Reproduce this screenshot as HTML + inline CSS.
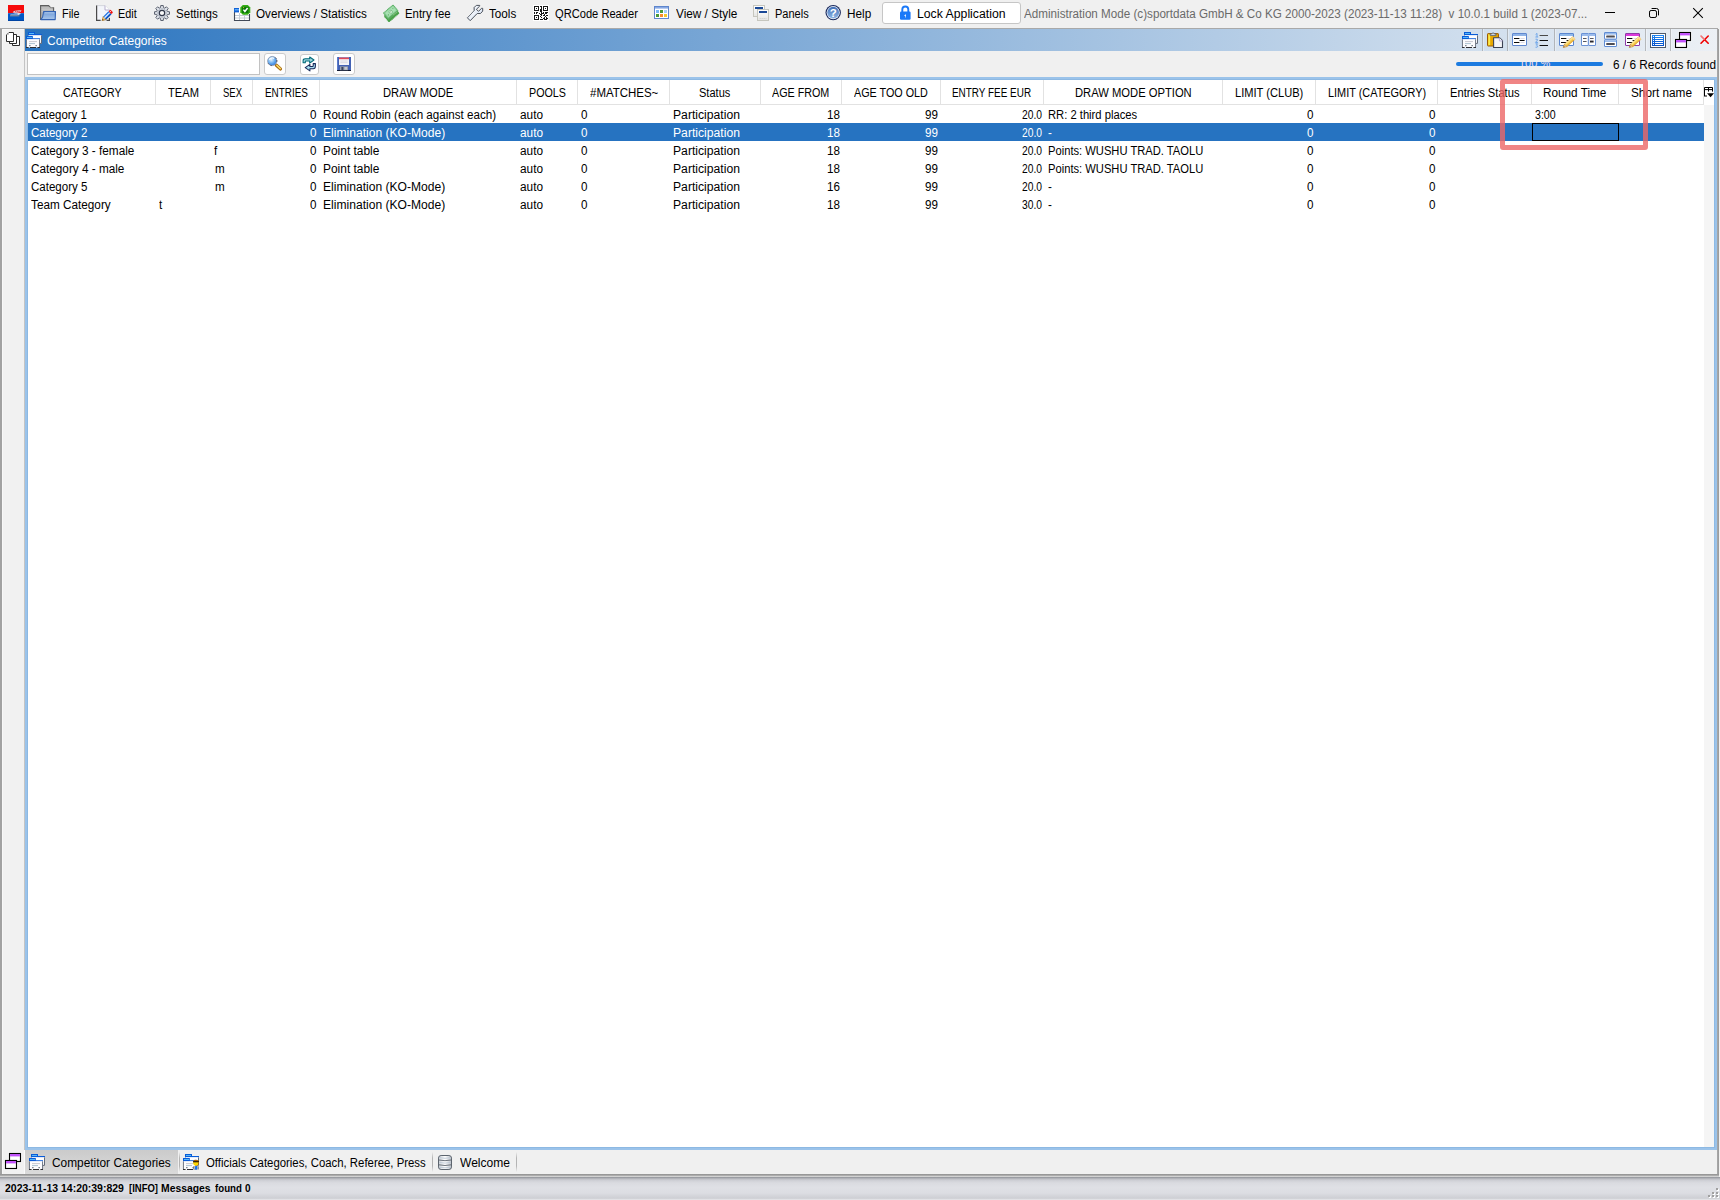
<!DOCTYPE html>
<html lang="en">
<head>
<meta charset="utf-8">
<title>Competitor Categories</title>
<style>
html,body{margin:0;padding:0;}
body{width:1720px;height:1200px;position:relative;overflow:hidden;background:#f0f0f0;font-family:"Liberation Sans",sans-serif;font-size:12px;color:#000;}
.a{position:absolute;}
.t{position:absolute;white-space:pre;transform-origin:0 0;font-family:"Liberation Sans",sans-serif;display:block;}
svg{position:absolute;overflow:visible;}
#menuline{left:0;top:28px;width:1718px;height:1px;background:#a9a9a9;}
#lborder{left:0;top:29px;width:2px;height:1146px;background:#a2a2a2;}
#rborder{left:1717px;top:29px;width:2px;height:1146px;background:linear-gradient(90deg,#a9a9a9,#9a9a9a);}
#bborder{left:0;top:1174px;width:1719px;height:3px;background:linear-gradient(180deg,#969696 0,#9a9a9a 45%,#cfcfcf 60%,#d4d4d4 100%);}
#title{left:25px;top:29px;width:1692px;height:22px;background:linear-gradient(90deg,#2873bf 0%,#ecf0f5 100%);}
#tools{display:none;}
.vsep{position:absolute;top:29px;width:1px;height:22px;background:rgba(150,150,150,0.6);box-shadow:1px 0 0 rgba(255,255,255,0.35);}
#search{left:27px;top:53px;width:231px;height:20px;background:#fff;border:1px solid #c2c2c2;}
.btn{position:absolute;background:#fff;border:1px solid #cbcbcb;border-radius:3px;box-sizing:border-box;}
#lockbtn{left:882px;top:2px;width:139px;height:22px;background:#fff;border:1px solid #c6c6c6;border-radius:3px;box-sizing:border-box;}
#table{left:25px;top:77px;width:1686px;height:1067px;border:3px solid #9bc3ea;background:#fff;}
#tblin{left:27px;top:79px;width:1688px;height:1069px;border:1px solid #8db9e3;box-sizing:border-box;}
#hline{left:28px;top:104px;width:1676px;height:1px;background:#e2e2e2;}
.hs{position:absolute;top:80px;width:1px;height:24px;background:#e2e2e2;}
#sbar{left:1704px;top:105px;width:10px;height:1042px;background:#f5f5f5;}
#sel{left:28px;top:123px;width:1676px;height:18px;background:#2673c1;}
#focus{left:1532px;top:123px;width:87px;height:18px;border:1px solid #000;box-sizing:border-box;}
#redbox{left:1500px;top:79px;width:148px;height:71px;border:5px solid rgba(236,102,102,0.8);border-radius:3px;box-sizing:border-box;}
#prog{left:1456px;top:62px;width:147px;height:4px;border-radius:2px;background:#1c7be0;overflow:hidden;}
#prog span{position:absolute;left:63px;top:-6px;font-size:11px;line-height:14px;color:#f2dfe6;letter-spacing:0;}
#tabact{left:25px;top:1150px;width:153px;height:24px;background:linear-gradient(180deg,#cbcbcb,#dadada);}
.tsep{position:absolute;top:1152px;width:1px;height:20px;background:linear-gradient(180deg,rgba(170,170,170,0),#b4b4b4 30%,#b4b4b4 70%,rgba(170,170,170,0));}
#lpane{left:2px;top:29px;width:22px;height:1145px;background:#f1f1f1;box-shadow:inset 1px 1px 0 #f8f8f8;}
#lpline{left:24px;top:29px;width:1px;height:1121px;background:#c4c4c4;}
#lpsep{left:24px;top:1150px;width:1px;height:24px;background:#fafafa;}
#status{left:0;top:1177px;width:1720px;height:23px;background:linear-gradient(180deg,#8f9197 0,#a4a6ac 4%,#bfc0c6 9%,#d0d1d7 16%,#dadbe0 26%,#dfe0e5 45%,#dcdde2 70%,#cfd0d5 90%,#d3d4d8 95%,#ececef 100%);}
.grip{position:absolute;width:2px;height:2px;background:#a0a0a0;box-shadow:1px 1px 0 #fff;}
</style>
</head>
<body>
<div class="a" id="menuline"></div>
<div class="a" id="lborder"></div>
<div class="a" id="rborder"></div>
<div class="a" id="lpane"></div>
<div class="a" id="lpline"></div>
<div class="a" id="title"></div>
<div class="a" id="tools"></div>
<div class="vsep" style="left:1482px"></div>
<div class="vsep" style="left:1507px"></div>
<div class="vsep" style="left:1554px"></div>
<div class="vsep" style="left:1645px"></div>
<div class="vsep" style="left:1670px"></div>
<div class="a" id="lockbtn"></div>
<div class="a" id="search"></div>
<div class="btn" style="left:264px;top:53px;width:22px;height:22px"></div>
<div class="btn" style="left:300px;top:54px;width:19px;height:21px"></div>
<div class="btn" style="left:333px;top:53px;width:22px;height:22px"></div>
<div class="a" id="prog"><span>100 %</span></div>
<div class="a" id="table"></div>
<div class="a" id="tblin"></div>
<div class="a" id="sbar"></div>
<div class="a" id="hline"></div>
<div class="hs" style="left:155px"></div>
<div class="hs" style="left:210px"></div>
<div class="hs" style="left:252px"></div>
<div class="hs" style="left:319px"></div>
<div class="hs" style="left:516px"></div>
<div class="hs" style="left:577px"></div>
<div class="hs" style="left:669px"></div>
<div class="hs" style="left:760px"></div>
<div class="hs" style="left:841px"></div>
<div class="hs" style="left:940px"></div>
<div class="hs" style="left:1043px"></div>
<div class="hs" style="left:1222px"></div>
<div class="hs" style="left:1315px"></div>
<div class="hs" style="left:1437px"></div>
<div class="hs" style="left:1531px"></div>
<div class="hs" style="left:1618px"></div>
<div class="hs" style="left:1703px"></div>
<div class="a" id="sel"></div>
<div class="a" id="focus"></div>
<div class="a" id="tabact"></div>
<div class="a" id="lpsep"></div>
<div class="tsep" style="left:179px"></div>
<div class="tsep" style="left:432px"></div>
<div class="tsep" style="left:516px"></div>
<div class="a" id="bborder"></div>
<div class="a" id="status"></div>
<div class="grip" style="left:1716px;top:1188px"></div>
<div class="grip" style="left:1712px;top:1191.5px"></div>
<div class="grip" style="left:1716px;top:1191.5px"></div>
<div class="grip" style="left:1708px;top:1195px"></div>
<div class="grip" style="left:1712px;top:1195px"></div>
<div class="grip" style="left:1716px;top:1195px"></div>
<svg width="0" height="0" style="left:0;top:0"><defs>
<linearGradient id="gBlueF" x1="0" y1="0" x2="0" y2="1"><stop offset="0" stop-color="#6f9bd8"/><stop offset="1" stop-color="#a9c6ea"/></linearGradient>
<linearGradient id="gHelp" x1="0" y1="0" x2="0" y2="1"><stop offset="0" stop-color="#3f6fb8"/><stop offset="1" stop-color="#8fb6e4"/></linearGradient>
<radialGradient id="gLens" cx="0.4" cy="0.35" r="0.7"><stop offset="0" stop-color="#e6f3fc"/><stop offset="0.55" stop-color="#6aaef0"/><stop offset="1" stop-color="#2c74d8"/></radialGradient>
<linearGradient id="gList" x1="0" y1="0" x2="0" y2="1"><stop offset="0" stop-color="#1c86f4"/><stop offset="1" stop-color="#0550c8"/></linearGradient>
<linearGradient id="gDb" x1="0" y1="0" x2="1" y2="0"><stop offset="0" stop-color="#c9ced4"/><stop offset="0.5" stop-color="#ffffff"/><stop offset="1" stop-color="#b9bec6"/></linearGradient>
<linearGradient id="gPen" x1="0" y1="0" x2="0" y2="1"><stop offset="0" stop-color="#fff6c0"/><stop offset="0.5" stop-color="#f8d45a"/><stop offset="1" stop-color="#e6a52c"/></linearGradient>
<linearGradient id="gWin" x1="0" y1="0" x2="0" y2="1"><stop offset="0" stop-color="#ffffff"/><stop offset="1" stop-color="#e4e4e2"/></linearGradient>
<linearGradient id="gClip" x1="0" y1="0" x2="1" y2="0"><stop offset="0" stop-color="#f8de30"/><stop offset="0.35" stop-color="#e8a800"/><stop offset="1" stop-color="#e0a000"/></linearGradient>
<linearGradient id="gWr" x1="0" y1="0" x2="1" y2="1"><stop offset="0" stop-color="#ffffff"/><stop offset="1" stop-color="#cfdcf0"/></linearGradient>
</defs></svg>
<svg style="left:8px;top:5px" width="16" height="16" viewBox="0 0 16 16" ><rect width="16" height="8.2" fill="#f60a0a"/><rect y="8.2" width="16" height="7.8" fill="#0058c6"/><rect y="15.2" width="16" height="0.8" fill="#00409a"/>
<path d="M4.6 7.6 C5.4 5.6 9 5 13.6 5.4 L12.4 7 C9 6.6 6.6 7 4.6 7.6Z" fill="#d8d4dc"/>
<path d="M5 7.8 C6 7 10 7.2 12.6 8 C13 9.4 11 10.2 9 10.2 L2.4 10.3 L2.4 9.6 L9 9.4 C10.4 9.3 10.6 8.8 8.6 8.6 C6.8 8.5 5.4 8.4 5 7.8Z" fill="#dcdde6"/>
<rect x="2" y="10.4" width="9.4" height="0.9" fill="#9c9488"/>
<path d="M7 6.4 H12.4" stroke="#e03040" stroke-width="0.9" stroke-dasharray="1 0.8"/></svg>
<svg style="left:40px;top:5px" width="16" height="16" viewBox="0 0 16 16" ><path d="M0.6 0.6 H8.6 L10.8 2.8 H13.6 V14.4 H0.6Z" fill="#b4b4b4" stroke="#5e5e5e" stroke-width="1.1"/>
<path d="M1.5 3 H12.6 M1.5 4.6 H12.6 M1.5 6.2 H12.6" stroke="#d0d0d0" stroke-width="0.7"/>
<path d="M3.6 6.6 H15.5 L15.2 14.6 H0.9 L2.6 12Z" fill="url(#gBlueF)" stroke="#3464b4" stroke-width="1.1" stroke-linejoin="round"/>
<path d="M4.6 7.8 H14.4" stroke="#c8dcf4" stroke-width="0.8"/></svg>
<svg style="left:96px;top:5px" width="17" height="17" viewBox="0 0 17 17" ><path d="M0.6 0.6 H9 L13.4 5 V15.4 H0.6Z" fill="#f3f5fa" stroke="#d0d2da" stroke-width="0.9"/>
<path d="M9 0.6 V5 H13.4" fill="#fff" stroke="#b0a8c8" stroke-width="0.9"/>
<path d="M0.6 0.4 V15.4 H4.6 M10.6 15.4 H13.4 V13" fill="none" stroke="#4a4a4a" stroke-width="1.2"/>
<g transform="translate(6.3,15.4) rotate(-45)"><path d="M0 0 L3.4 -2 V2Z" fill="#f8dcae" stroke="#c08420" stroke-width="0.9"/><path d="M0 0 L1.3 -0.8 V0.8Z" fill="#5a3a18"/>
<rect x="3.4" y="-2" width="7.4" height="4" fill="#1c6ee0"/><rect x="3.4" y="-0.9" width="7.4" height="1.3" fill="#dcecff"/><rect x="3.4" y="1.1" width="7.4" height="0.9" fill="#0c4cb8"/>
<rect x="10.8" y="-2" width="2.6" height="4" rx="1" fill="#f01010"/><rect x="11.4" y="-1" width="1.2" height="1" fill="#ffd8d8"/></g></svg>
<svg style="left:154px;top:5px" width="16" height="16" viewBox="0 0 16 16" ><path d="M13.41 6.55 L15.50 6.75 L15.50 9.25 L13.41 9.45 L12.85 10.80 L14.18 12.42 L12.42 14.18 L10.80 12.85 L9.45 13.41 L9.25 15.50 L6.75 15.50 L6.55 13.41 L5.20 12.85 L3.58 14.18 L1.82 12.42 L3.15 10.80 L2.59 9.45 L0.50 9.25 L0.50 6.75 L2.59 6.55 L3.15 5.20 L1.82 3.58 L3.58 1.82 L5.20 3.15 L6.55 2.59 L6.75 0.50 L9.25 0.50 L9.45 2.59 L10.80 3.15 L12.42 1.82 L14.18 3.58 L12.85 5.20Z" fill="#dfe3ea" stroke="#5c6270" stroke-width="1" stroke-linejoin="round"/>
<circle cx="8" cy="8" r="4.3" fill="none" stroke="#b4bac6" stroke-width="1"/>
<circle cx="8" cy="8" r="2.7" fill="#fafafa" stroke="#343a4c" stroke-width="1.2"/></svg>
<svg style="left:234px;top:5px" width="17" height="16" viewBox="0 0 17 16" ><rect x="0.5" y="3.5" width="15" height="12" fill="#fff"/>
<path d="M0.5 10.5 H15.5 M0.5 13 H15.5 M5.5 8 V15.5 M10.5 8 V15.5" stroke="#c4ccd6" stroke-width="1"/>
<path d="M0.5 7 V15.5 H15.5 V9" fill="none" stroke="#434a58" stroke-width="1.1"/>
<rect x="0" y="3" width="5" height="4.4" fill="#1262d6"/><rect x="0.8" y="4.2" width="4.2" height="1.2" fill="#6cb8ff"/>
<path d="M8.8 0 H13.8 L16.3 2.5 V7.3 L13.8 9.8 H8.8 L6.3 7.3 V2.5Z" fill="#34ae14"/>
<rect x="8.1" y="1.7" width="6.4" height="6.4" rx="0.6" fill="#0a760a"/>
<path d="M9.4 4.6 L10.9 6.5 L13.6 3" fill="none" stroke="#fff" stroke-width="1.5"/>
<rect x="9" y="2.2" width="1.1" height="0.9" fill="#e8c020"/></svg>
<svg style="left:383px;top:5px" width="17" height="17" viewBox="0 0 17 17" ><g transform="translate(8.7,9.9) rotate(-40.5)"><rect x="-6.6" y="-3.6" width="13.2" height="7.2" fill="#46a046" stroke="#46a046" stroke-width="1" stroke-dasharray="1 0.7"/></g>
<g transform="translate(8.2,8.4) rotate(-40.5)"><rect x="-6.5" y="-3.6" width="13" height="7.2" fill="#58aa5c"/><path d="M1 2.4 H5" stroke="#e8e6c0" stroke-width="0.9" stroke-dasharray="1 0.5"/></g>
<g transform="translate(7.6,6.7) rotate(-40.5)"><rect x="-6.3" y="-3.6" width="12.6" height="7.2" fill="#8ed29a" stroke="#5cae66" stroke-width="1" stroke-dasharray="1.1 0.5"/>
<rect x="-5" y="-2.5" width="10" height="5" fill="#a8e0b2"/><circle cx="0" cy="0.3" r="1.7" fill="#eef9f0" stroke="#6cb878" stroke-width="0.7"/><circle cx="0" cy="0.3" r="0.6" fill="#58aa5c"/>
<circle cx="-3.8" cy="1" r="0.6" fill="#58aa5c"/><circle cx="3.8" cy="-1" r="0.6" fill="#6cb878"/></g></svg>
<svg style="left:467px;top:5px" width="17" height="17" viewBox="0 0 17 17" ><path d="M0.4 12.8 L3.2 15.7 L10.2 8.5 H13.5 L15.7 6.1 V3.3 H14.5 L11.6 6.3 L9.3 4.4 L12.7 1.1 V0.4 H9.3 L7.2 2.5 V5.7Z" fill="url(#gWr)" stroke="#4c525c" stroke-width="1" stroke-linejoin="round"/>
<path d="M1.8 12.4 L7.6 6.6 M3 13.6 L8.2 8.2" stroke="#fff" stroke-width="0.9" stroke-dasharray="0.9 0.7"/>
<path d="M0.4 12.8 L7.2 5.7 V2.5 L9.3 0.4" fill="none" stroke="#8a929c" stroke-width="1" stroke-dasharray="1.1 0.5"/></svg>
<svg style="left:533px;top:5px" width="16" height="16" viewBox="0 0 16 16" shape-rendering="crispEdges"><rect width="16" height="16" fill="#fff"/><rect x="1.5" y="1.5" width="4" height="4" fill="#fff" stroke="#1a1a1a" stroke-width="1"/><rect x="3" y="3" width="1" height="1" fill="#1a1a1a"/><rect x="10.5" y="1.5" width="4" height="4" fill="#fff" stroke="#1a1a1a" stroke-width="1"/><rect x="12" y="3" width="1" height="1" fill="#1a1a1a"/><rect x="1.5" y="10.5" width="4" height="4" fill="#fff" stroke="#1a1a1a" stroke-width="1"/><rect x="3" y="12" width="1" height="1" fill="#1a1a1a"/><path d="M7 1h1v1h-1zM8 1h1v1h-1zM8 2h1v1h-1zM8 3h1v1h-1zM7 4h1v1h-1zM8 4h1v1h-1zM7 5h1v1h-1zM8 5h1v1h-1zM7 6h1v1h-1zM8 6h1v1h-1zM1 7h1v1h-1zM3 7h1v1h-1zM4 7h1v1h-1zM8 7h1v1h-1zM10 7h1v1h-1zM12 7h1v1h-1zM13 7h1v1h-1zM14 7h1v1h-1zM1 8h1v1h-1zM3 8h1v1h-1zM6 8h1v1h-1zM8 8h1v1h-1zM9 8h1v1h-1zM10 8h1v1h-1zM12 8h1v1h-1zM13 8h1v1h-1zM7 9h1v1h-1zM8 9h1v1h-1zM11 9h1v1h-1zM8 10h1v1h-1zM10 10h1v1h-1zM11 10h1v1h-1zM13 10h1v1h-1zM14 10h1v1h-1zM7 11h1v1h-1zM12 11h1v1h-1zM8 12h1v1h-1zM11 12h1v1h-1zM13 12h1v1h-1zM10 13h1v1h-1zM11 13h1v1h-1zM13 13h1v1h-1zM14 13h1v1h-1zM7 14h1v1h-1zM8 14h1v1h-1zM9 14h1v1h-1zM11 14h1v1h-1zM12 14h1v1h-1zM13 14h1v1h-1z" fill="#1a1a1a"/></svg>
<svg style="left:654px;top:6px" width="15" height="13" viewBox="0 0 15 13" ><rect x="0.5" y="0.5" width="14" height="12" fill="#fff" stroke="#5f86cc" stroke-width="1"/><rect x="1" y="1" width="13" height="1.6" fill="#86a8e4"/>
<rect x="2" y="4" width="3" height="3" fill="#78b8fa"/><rect x="6" y="4" width="3" height="3" fill="#4a9a38"/><rect x="10" y="4" width="3" height="3" fill="#a6d0f8"/>
<rect x="2" y="8" width="3" height="3" fill="#4a9a38"/><rect x="6" y="8" width="3" height="3" fill="#f88c2c"/><rect x="10" y="8" width="3" height="3" fill="#f2c82e"/></svg>
<svg style="left:753px;top:5px" width="16" height="16" viewBox="0 0 16 16" ><rect x="0.5" y="0.5" width="11" height="11" fill="url(#gWin)" stroke="#c6c6be" stroke-width="1"/><rect x="2" y="2" width="8" height="2" fill="#1a4896"/>
<rect x="4.5" y="4.5" width="11" height="11" fill="url(#gWin)" stroke="#c6c6be" stroke-width="1"/><rect x="6" y="6" width="8" height="2" fill="#1a4896"/>
<path d="M6.5 13.5 H13.5" stroke="#d2d2d0" stroke-width="1" stroke-dasharray="1.4 0.6"/></svg>
<svg style="left:825px;top:4px" width="17" height="17" viewBox="0 0 17 17" ><circle cx="8.2" cy="8.6" r="7.7" fill="#18285c"/><circle cx="8.2" cy="8.6" r="6.6" fill="#eef3fa"/><circle cx="8.2" cy="8.6" r="5.9" fill="url(#gHelp)"/>
<text x="8.2" y="12.6" text-anchor="middle" font-family="Liberation Sans, sans-serif" font-weight="bold" font-size="11.5" fill="#fff">?</text></svg>
<svg style="left:899px;top:5px" width="13" height="16" viewBox="0 0 13 16" ><path d="M3.3 7.5 V4.6 A3 3.1 0 0 1 9.3 4.6 V7.5" fill="none" stroke="#1b79f8" stroke-width="1.9"/>
<rect x="1" y="6.6" width="10.6" height="8.2" rx="1.2" fill="#1b79f8"/>
<path d="M6.9 9.3 L5 10.6 L6.3 10.9 V12.4 H6.9Z" fill="#fff"/></svg>
<svg style="left:1600px;top:4px" width="110" height="18" viewBox="0 0 110 18" ><rect x="5" y="8" width="10" height="1" fill="#000"/>
<rect x="49.5" y="6.5" width="7" height="7" rx="1.6" fill="none" stroke="#000" stroke-width="1"/>
<path d="M51.6 4.5 H56.5 A2 2 0 0 1 58.5 6.5 V11.4" fill="none" stroke="#000" stroke-width="1"/>
<path d="M93.2 4.2 L102.8 13.8 M102.8 4.2 L93.2 13.8" stroke="#000" stroke-width="1.05"/></svg>
<svg style="left:6px;top:32px" width="15" height="15" viewBox="0 0 15 15" ><path d="M6.6 4.5 H13.5 V13.5 H6.5 Z" fill="#fff" stroke="#2c2c2c" stroke-width="1"/>
<path d="M3.6 2.5 H10.5 V11.5 H3.5 Z" fill="#fff" stroke="#2c2c2c" stroke-width="1"/>
<path d="M3 0.5 H7.5 V9.5 H0.5 V3 Z" fill="#fff" stroke="#2c2c2c" stroke-width="1" stroke-linejoin="round"/>
<path d="M0.8 2.9 L2.9 2.9 L2.9 0.8Z" fill="#c8c8c8"/></svg>
<svg style="left:26px;top:32px" width="16" height="16" viewBox="0 0 16 16" ><path d="M2 0 H9 V2 H16 V3.4 H2Z" fill="#0a5cd8"/><rect x="3" y="1" width="5" height="0.9" fill="#5ec6ff"/>
<rect x="2.4" y="3.2" width="13.2" height="8.2" fill="#fdfdff"/>
<path d="M15.5 3.4 V11.4 H13.8" fill="none" stroke="#626a78" stroke-width="1"/>
<path d="M2.5 3.4 V7" stroke="#8a94a6" stroke-width="0.8"/>
<path d="M0 4 H6.8 V6.2 H14 V7.4 H0Z" fill="#0a5cd8"/><rect x="1" y="5" width="5" height="0.9" fill="#5ec6ff"/>
<rect x="0.4" y="7.2" width="13.2" height="8.4" fill="#fcfcfe"/>
<path d="M0.45 7.4 V15.4 M13.55 7.4 V15.4" stroke="#626a78" stroke-width="0.9"/>
<path d="M3 9.6 H11" stroke="#c2c2ca" stroke-width="0.9"/><path d="M3 11.6 H9" stroke="#a2bacc" stroke-width="0.9"/>
<path d="M3 13.7 H4.6 M9.4 13.7 H11" stroke="#626c78" stroke-width="1"/>
<path d="M0 15.5 H2.6 M4 15.5 H10 M11.4 15.5 H14" stroke="#2e2e32" stroke-width="1"/></svg>
<svg style="left:264px;top:53px" width="22" height="22" viewBox="0 0 22 22" ><path d="M12.4 12.2 L16.4 15.9" stroke="#a8660c" stroke-width="3.3" stroke-linecap="round"/><path d="M12.8 12.3 L16.3 15.6" stroke="#f8dc68" stroke-width="1.5" stroke-linecap="round"/>
<circle cx="8.2" cy="8" r="4.6" fill="url(#gLens)" stroke="#8f9ab0" stroke-width="0.8"/><path d="M5.4 6.8 A3.2 2.8 0 0 1 10.2 5.4" fill="none" stroke="#f4fbff" stroke-width="1.2"/>
<path d="M11.4 4.6 A4.6 4.6 0 0 1 12.6 9.6" fill="none" stroke="#2a3040" stroke-width="0.9" stroke-dasharray="1.4 1.6"/><path d="M4.2 10.4 A4.6 4.6 0 0 0 8.6 12.6" fill="none" stroke="#2a3040" stroke-width="0.8" stroke-dasharray="1.2 1.8"/></svg>
<svg style="left:300px;top:54px" width="19" height="21" viewBox="0 0 19 21" ><path d="M3.1 8.8 V6.8 Q3.1 4.7 5.2 4.7 H9.7 V3 L14 6 L9.7 9.1 V7 H5.8 Q5.3 7 5.3 7.5 V8.8Z" fill="#9fd6e0" stroke="#006a78" stroke-width="1.05" stroke-linejoin="round"/>
<path d="M15.4 9.6 V12 Q15.4 14.7 13.3 14.7 H9.9 V16.9 L5.2 13.6 L9.9 10.4 V12.4 H12.7 Q13.2 12.4 13.2 11.9 V9.6Z" fill="#a6dcee" stroke="#1a2a5a" stroke-width="1.05" stroke-linejoin="round"/></svg>
<svg style="left:337px;top:57px" width="14" height="14" viewBox="0 0 14 14" ><rect x="0" y="0" width="14" height="14" fill="#4362b4"/><rect x="0" y="13" width="14" height="1" fill="#101830"/><rect x="0" y="0" width="1" height="13" fill="#5c7ccc"/>
<rect x="2" y="0.6" width="10" height="7.4" fill="#f4f4f8"/><rect x="2" y="0.6" width="10" height="1.6" fill="#e04858"/><path d="M3.4 4 H10.6 M3.4 5.6 H10.6" stroke="#d6d6de" stroke-width="0.8"/>
<rect x="3" y="9.4" width="8" height="3.8" fill="#9aa0ac"/><rect x="4.4" y="10" width="2" height="3" fill="#3a4460"/><rect x="7.6" y="10" width="2.4" height="2.6" fill="#c4c8d0"/></svg>
<svg style="left:1462px;top:32px" width="16" height="16" viewBox="0 0 16 16" ><path d="M2 0 H9 V2 H16 V3.4 H2Z" fill="#0a5cd8"/><rect x="3" y="1" width="5" height="0.9" fill="#5ec6ff"/>
<rect x="2.4" y="3.2" width="13.2" height="8.2" fill="#fdfdff"/>
<path d="M15.5 3.4 V11.4 H13.8" fill="none" stroke="#626a78" stroke-width="1"/>
<path d="M2.5 3.4 V7" stroke="#8a94a6" stroke-width="0.8"/>
<path d="M0 4 H6.8 V6.2 H14 V7.4 H0Z" fill="#0a5cd8"/><rect x="1" y="5" width="5" height="0.9" fill="#5ec6ff"/>
<rect x="0.4" y="7.2" width="13.2" height="8.4" fill="#fcfcfe"/>
<path d="M0.45 7.4 V15.4 M13.55 7.4 V15.4" stroke="#626a78" stroke-width="0.9"/>
<path d="M3 9.6 H11" stroke="#c2c2ca" stroke-width="0.9"/><path d="M3 11.6 H9" stroke="#a2bacc" stroke-width="0.9"/>
<path d="M3 13.7 H4.6 M9.4 13.7 H11" stroke="#626c78" stroke-width="1"/>
<path d="M0 15.5 H2.6 M4 15.5 H10 M11.4 15.5 H14" stroke="#2e2e32" stroke-width="1"/></svg>
<svg style="left:1487px;top:32px" width="17" height="17" viewBox="0 0 17 17" ><rect x="0.5" y="1.6" width="11" height="12.4" rx="0.6" fill="url(#gClip)" stroke="#9c5a08" stroke-width="1"/><rect x="1.6" y="2.6" width="1.4" height="10.4" fill="#fbe94c"/>
<path d="M3.2 3.4 V2 H4.6 A1.6 1.6 0 0 1 7.6 2 H9 V3.4Z" fill="#dfe3ea" stroke="#5a6474" stroke-width="0.9"/>
<path d="M6.6 5.8 H12.6 L15.5 8.7 V15.5 H6.6Z" fill="#f4f5f8" stroke="#3c4254" stroke-width="1.1" stroke-linejoin="round"/><path d="M12.4 5.8 V8.9 H15.5" fill="#fff" stroke="#a89cd0" stroke-width="0.8"/></svg>
<svg style="left:1512px;top:33px" width="17" height="17" viewBox="0 0 17 17" ><rect x="0.5" y="0.5" width="14" height="12" rx="0.3" fill="#fff" stroke="#5f88cf" stroke-width="1"/><rect x="1" y="1" width="13" height="2" fill="#8fb4e8"/>
<path d="M2 5.5 H7.4 M7.6 7.5 H12.6 M2 9.5 H7.4" stroke="#0a0a0a" stroke-width="1.1"/><path d="M8.4 5.5 H12.6 M8.4 9.5 H12.6" stroke="#dcdce4" stroke-width="1"/></svg>
<svg style="left:1535px;top:32px" width="14" height="16" viewBox="0 0 14 16" ><path d="M4.6 3.5 H13" stroke="#4a4a4a" stroke-width="1"/><path d="M4.6 8.5 H13 M4.6 13.5 H13" stroke="#111" stroke-width="1"/>
<path d="M0.6 2.6 L2 1.4 V5 M0.4 5 H3.2" fill="none" stroke="#6ea6ea" stroke-width="1"/>
<path d="M0.5 7.2 H2.2 L2.6 8 L0.5 10.4 H3" fill="none" stroke="#6ea6ea" stroke-width="1"/>
<path d="M0.5 11.8 H2.6 L1.4 13.2 L2.8 14.2 L2.2 15.2 H0.5" fill="none" stroke="#6ea6ea" stroke-width="1"/></svg>
<svg style="left:1559px;top:33px" width="17" height="17" viewBox="0 0 17 17" ><rect x="0.5" y="0.5" width="14" height="12" rx="0.3" fill="#fff" stroke="#5a86d0" stroke-width="1"/><rect x="1" y="1" width="13" height="2" fill="#8fb8ea"/>
<path d="M2 5.5 H7.4 M7.6 7.5 H12.6 M2 9.5 H7.4" stroke="#0a0a0a" stroke-width="1.1"/><path d="M8.4 5.5 H12.6 M8.4 9.5 H12.6" stroke="#dcdce4" stroke-width="1"/><g transform="translate(4.4,14.4) rotate(-42)"><path d="M0 0 L3.2 -1.8 V1.8Z" fill="#f6dcae" stroke="#c88a30" stroke-width="0.7"/><path d="M0 0 L1.2 -0.7 V0.7Z" fill="#7a4a18"/>
<rect x="3.2" y="-1.8" width="11" height="3.6" rx="0.6" fill="url(#gPen)" stroke="#e0a434" stroke-width="0.5"/><rect x="12.6" y="-1.8" width="2" height="3.6" rx="0.9" fill="#f8d898"/></g></svg>
<svg style="left:1581px;top:33px" width="15" height="13" viewBox="0 0 15 13" ><rect x="0.5" y="0.5" width="6.8" height="12" rx="0.3" fill="#fff" stroke="#6a92d6" stroke-width="1"/><rect x="7.7" y="0.5" width="6.8" height="12" rx="0.3" fill="#fff" stroke="#6a92d6" stroke-width="1"/>
<rect x="1" y="1" width="13" height="2" fill="#9cbcec"/>
<path d="M2 5.5 H5.6 M2 8.5 H5.6 M9 5.5 H12.6" stroke="#585860" stroke-width="1"/><rect x="9" y="7.6" width="3.6" height="1.9" fill="#26262c"/></svg>
<svg style="left:1604px;top:32px" width="13" height="15" viewBox="0 0 13 15" ><rect x="0.5" y="0.5" width="12" height="6.6" rx="0.3" fill="#fff" stroke="#5f8cd4" stroke-width="1"/><rect x="1" y="1" width="11" height="1.6" fill="#9abcec"/><rect x="2.2" y="3.6" width="8.6" height="2" rx="0.4" fill="#4c4c54"/>
<rect x="0.5" y="7.9" width="12" height="6.6" rx="0.3" fill="#fff" stroke="#5f8cd4" stroke-width="1"/><rect x="1" y="8.4" width="11" height="1.6" fill="#9abcec"/><rect x="2.2" y="11" width="8.6" height="2" rx="0.4" fill="#4c4c54"/></svg>
<svg style="left:1625px;top:33px" width="17" height="17" viewBox="0 0 17 17" ><rect x="0.5" y="0.5" width="14" height="12" rx="0.3" fill="#fff" stroke="#8e3aa8" stroke-width="1"/><rect x="1" y="1" width="13" height="2" fill="#dc3adc"/>
<path d="M2 5.5 H7.4 M7.6 7.5 H12.6 M2 9.5 H7.4" stroke="#0a0a0a" stroke-width="1.1"/><path d="M8.4 5.5 H12.6 M8.4 9.5 H12.6" stroke="#dcdce4" stroke-width="1"/><g transform="translate(4.4,14.4) rotate(-42)"><path d="M0 0 L3.2 -1.8 V1.8Z" fill="#f6dcae" stroke="#c88a30" stroke-width="0.7"/><path d="M0 0 L1.2 -0.7 V0.7Z" fill="#7a4a18"/>
<rect x="3.2" y="-1.8" width="11" height="3.6" rx="0.6" fill="url(#gPen)" stroke="#e0a434" stroke-width="0.5"/><rect x="12.6" y="-1.8" width="2" height="3.6" rx="0.9" fill="#f8d898"/></g></svg>
<svg style="left:1650px;top:33px" width="16" height="15" viewBox="0 0 16 15" shape-rendering="crispEdges"><rect x="0.5" y="0.5" width="15" height="14" fill="#fff" stroke="#4e5a6a" stroke-width="1"/><rect x="2" y="2" width="12" height="11" fill="url(#gList)"/><rect x="3" y="3" width="1" height="1" fill="#fff"/><rect x="5" y="3" width="8" height="1" fill="#fff"/><rect x="3" y="5" width="1" height="1" fill="#fff"/><rect x="5" y="5" width="8" height="1" fill="#fff"/><rect x="3" y="7" width="1" height="1" fill="#fff"/><rect x="5" y="7" width="8" height="1" fill="#fff"/><rect x="3" y="9" width="1" height="1" fill="#fff"/><rect x="5" y="9" width="8" height="1" fill="#fff"/><rect x="3" y="11" width="1" height="1" fill="#fff"/><rect x="5" y="11" width="8" height="1" fill="#fff"/></svg>
<svg style="left:1675px;top:32px" width="17" height="17" viewBox="0 0 17 17" ><rect x="3.2" y="-0.6" width="13.6" height="10" fill="#fff" opacity="0.9"/><rect x="-0.8" y="6.6" width="13.4" height="10.2" fill="#fff" opacity="0.9"/>
<rect x="4.5" y="0.5" width="11" height="8" fill="#fff" stroke="#000" stroke-width="1.15"/><rect x="5.05" y="1.05" width="9.9" height="2.35" fill="#c04ffa"/>
<rect x="0.5" y="7.5" width="11" height="8" fill="#fff" stroke="#000" stroke-width="1.15"/><rect x="1.05" y="8.05" width="9.9" height="2.35" fill="#c04ffa"/></svg>
<svg style="left:1699px;top:34px" width="11" height="11" viewBox="0 0 11 11" ><path d="M2 2 L9.2 9.2" stroke="#f00000" stroke-width="1.6" stroke-linecap="round"/><path d="M9.2 2 L2 9.2" stroke="#f00000" stroke-width="1.6" stroke-linecap="round"/>
<path d="M1.8 1.8 L5 5" stroke="#f2eef0" stroke-width="1.9" stroke-linecap="round" opacity="0.5"/></svg>
<svg style="left:1704px;top:87px" width="10" height="11" viewBox="0 0 10 11" ><path d="M0.5 9 V0.5 H8.5 V4.6 M0.5 2.6 H8.5 M4.5 0.5 V4.6 M0 9 H3" fill="none" stroke="#000" stroke-width="1"/><path d="M3 6.2 H10 L6.5 10.2Z" fill="#000"/></svg>
<svg style="left:4.6px;top:1153px" width="17" height="17" viewBox="0 0 17 17" ><rect x="3.2" y="-0.6" width="13.6" height="10" fill="#fff" opacity="0.9"/><rect x="-0.8" y="6.6" width="13.4" height="10.2" fill="#fff" opacity="0.9"/>
<rect x="4.5" y="0.5" width="11" height="8" fill="#fff" stroke="#000" stroke-width="1.15"/><rect x="5.05" y="1.05" width="9.9" height="2.35" fill="#c04ffa"/>
<rect x="0.5" y="7.5" width="11" height="8" fill="#fff" stroke="#000" stroke-width="1.15"/><rect x="1.05" y="8.05" width="9.9" height="2.35" fill="#c04ffa"/></svg>
<svg style="left:29px;top:1154px" width="16" height="16" viewBox="0 0 16 16" ><path d="M2 0 H9 V2 H16 V3.4 H2Z" fill="#0a5cd8"/><rect x="3" y="1" width="5" height="0.9" fill="#5ec6ff"/>
<rect x="2.4" y="3.2" width="13.2" height="8.2" fill="#fdfdff"/>
<path d="M15.5 3.4 V11.4 H13.8" fill="none" stroke="#626a78" stroke-width="1"/>
<path d="M2.5 3.4 V7" stroke="#8a94a6" stroke-width="0.8"/>
<path d="M0 4 H6.8 V6.2 H14 V7.4 H0Z" fill="#0a5cd8"/><rect x="1" y="5" width="5" height="0.9" fill="#5ec6ff"/>
<rect x="0.4" y="7.2" width="13.2" height="8.4" fill="#fcfcfe"/>
<path d="M0.45 7.4 V15.4 M13.55 7.4 V15.4" stroke="#626a78" stroke-width="0.9"/>
<path d="M3 9.6 H11" stroke="#c2c2ca" stroke-width="0.9"/><path d="M3 11.6 H9" stroke="#a2bacc" stroke-width="0.9"/>
<path d="M3 13.7 H4.6 M9.4 13.7 H11" stroke="#626c78" stroke-width="1"/>
<path d="M0 15.5 H2.6 M4 15.5 H10 M11.4 15.5 H14" stroke="#2e2e32" stroke-width="1"/></svg>
<svg style="left:183px;top:1154px" width="16" height="16" viewBox="0 0 16 16" ><path d="M2 0 H9 V2 H16 V3.4 H2Z" fill="#0a5cd8"/><rect x="3" y="1" width="5" height="0.9" fill="#5ec6ff"/>
<rect x="2.4" y="3.2" width="13.2" height="8.2" fill="#fdfdff"/>
<path d="M15.5 3.4 V11.4 H13.8" fill="none" stroke="#626a78" stroke-width="1"/>
<path d="M2.5 3.4 V7" stroke="#8a94a6" stroke-width="0.8"/>
<path d="M0 4 H6.8 V6.2 H14 V7.4 H0Z" fill="#0a5cd8"/><rect x="1" y="5" width="5" height="0.9" fill="#5ec6ff"/>
<rect x="0.4" y="7.2" width="13.2" height="8.4" fill="#fcfcfe"/>
<path d="M0.45 7.4 V15.4 M13.55 7.4 V15.4" stroke="#626a78" stroke-width="0.9"/>
<path d="M3 9.6 H11" stroke="#c2c2ca" stroke-width="0.9"/><path d="M3 11.6 H9" stroke="#a2bacc" stroke-width="0.9"/>
<path d="M3 13.7 H4.6 M9.4 13.7 H11" stroke="#626c78" stroke-width="1"/>
<path d="M0 15.5 H2.6 M4 15.5 H10 M11.4 15.5 H14" stroke="#2e2e32" stroke-width="1"/><path d="M10.6 12 H15.4 V15.6 H10.6Z" fill="#fbfbfd"/><path d="M10.4 12.4 L11.4 11.8 V15.6 H10.4Z M15.6 12.4 L14.6 11.8 V15.6 H15.6Z" fill="#4a5058"/>
<path d="M12.2 11.6 H14 L14.3 15.6 H11.9Z" fill="#1270f0"/>
<path d="M10.2 8 H15.8 V9.6 C15.8 10.8 14.4 11.9 13 11.9 C11.6 11.9 10.2 10.8 10.2 9.6Z" fill="#fcd800"/><path d="M11.6 10.8 C12.4 11.9 13.6 11.9 14.4 10.8 C13.6 11.3 12.4 11.3 11.6 10.8Z" fill="#f08a10"/>
<path d="M10 8.2 C10 6.4 11.4 5.8 13 5.8 C14.8 5.8 16 6.6 16 8.2Z" fill="#a86008"/><rect x="10" y="7.2" width="6" height="1" fill="#1a1208"/>
<path d="M15.2 8.2 H16 V10.4 L15.2 11Z" fill="#a86008"/></svg>
<svg style="left:438px;top:1155px" width="14" height="15" viewBox="0 0 14 15" ><rect x="0.5" y="0.5" width="13" height="14" rx="2.6" fill="url(#gDb)" stroke="#5c646e" stroke-width="1"/>
<path d="M0.8 5 Q7 6.4 13.2 5 M0.8 9.8 Q7 11.2 13.2 9.8" fill="none" stroke="#5c646e" stroke-width="0.9"/>
<path d="M1.2 2.6 Q7 4 12.8 2.6 M1.2 7.4 Q7 8.8 12.8 7.4 M1.2 12.2 Q7 13.4 12.8 12.2" fill="none" stroke="#b8c4d2" stroke-width="0.8"/></svg>
<span class="t" style="left:62.20px;top:5.84px;font-size:12px;line-height:16px;transform:scaleX(0.9053)">File</span>
<span class="t" style="left:118.20px;top:5.84px;font-size:12px;line-height:16px;transform:scaleX(0.9042)">Edit</span>
<span class="t" style="left:175.70px;top:5.84px;font-size:12px;line-height:16px;transform:scaleX(0.9640)">Settings</span>
<span class="t" style="left:256.20px;top:5.84px;font-size:12px;line-height:16px;transform:scaleX(0.9717)">Overviews / Statistics</span>
<span class="t" style="left:405.10px;top:5.84px;font-size:12px;line-height:16px;transform:scaleX(0.9493)">Entry fee</span>
<span class="t" style="left:489.30px;top:5.84px;font-size:12px;line-height:16px;transform:scaleX(0.9745)">Tools</span>
<span class="t" style="left:555.10px;top:5.84px;font-size:12px;line-height:16px;transform:scaleX(0.9275)">QRCode Reader</span>
<span class="t" style="left:675.70px;top:5.84px;font-size:12px;line-height:16px;transform:scaleX(0.9825)">View / Style</span>
<span class="t" style="left:775.30px;top:5.84px;font-size:12px;line-height:16px;transform:scaleX(0.9185)">Panels</span>
<span class="t" style="left:847.10px;top:5.84px;font-size:12px;line-height:16px;transform:scaleX(0.9798)">Help</span>
<span class="t" style="left:917.10px;top:5.84px;font-size:12px;line-height:16px;transform:scaleX(1.0206)">Lock Application</span>
<span class="t" style="left:1024.10px;top:5.84px;font-size:12px;line-height:16px;color:#6a6a6a;transform:scaleX(0.9713)">Administration Mode (c)sportdata GmbH &amp; Co KG 2000-2023 (2023-11-13 11:28)  v 10.0.1 build 1 (2023-07...</span>
<span class="t" style="left:47.20px;top:32.84px;font-size:12px;line-height:16px;color:#fff;transform:scaleX(0.9979)">Competitor Categories</span>
<span class="t" style="left:1612.70px;top:56.84px;font-size:12px;line-height:16px;transform:scaleX(0.9850)">6 / 6 Records found</span>
<span class="t" style="left:63.10px;top:84.84px;font-size:12px;line-height:16px;transform:scaleX(0.8833)">CATEGORY</span>
<span class="t" style="left:167.70px;top:84.84px;font-size:12px;line-height:16px;transform:scaleX(0.9269)">TEAM</span>
<span class="t" style="left:222.70px;top:84.84px;font-size:12px;line-height:16px;transform:scaleX(0.7914)">SEX</span>
<span class="t" style="left:265.10px;top:84.84px;font-size:12px;line-height:16px;transform:scaleX(0.8249)">ENTRIES</span>
<span class="t" style="left:383.30px;top:84.84px;font-size:12px;line-height:16px;transform:scaleX(0.9305)">DRAW MODE</span>
<span class="t" style="left:529.10px;top:84.84px;font-size:12px;line-height:16px;transform:scaleX(0.8925)">POOLS</span>
<span class="t" style="left:589.70px;top:84.84px;font-size:12px;line-height:16px;transform:scaleX(0.9559)">#MATCHES~</span>
<span class="t" style="left:699.30px;top:84.84px;font-size:12px;line-height:16px;transform:scaleX(0.9201)">Status</span>
<span class="t" style="left:772.10px;top:84.84px;font-size:12px;line-height:16px;transform:scaleX(0.8952)">AGE FROM</span>
<span class="t" style="left:854.10px;top:84.84px;font-size:12px;line-height:16px;transform:scaleX(0.8974)">AGE TOO OLD</span>
<span class="t" style="left:952.10px;top:84.84px;font-size:12px;line-height:16px;transform:scaleX(0.8270)">ENTRY FEE EUR</span>
<span class="t" style="left:1075.30px;top:84.84px;font-size:12px;line-height:16px;transform:scaleX(0.9346)">DRAW MODE OPTION</span>
<span class="t" style="left:1235.10px;top:84.84px;font-size:12px;line-height:16px;transform:scaleX(0.9256)">LIMIT (CLUB)</span>
<span class="t" style="left:1328.10px;top:84.84px;font-size:12px;line-height:16px;transform:scaleX(0.9082)">LIMIT (CATEGORY)</span>
<span class="t" style="left:1450.10px;top:84.84px;font-size:12px;line-height:16px;transform:scaleX(0.9304)">Entries Status</span>
<span class="t" style="left:1543.10px;top:84.84px;font-size:12px;line-height:16px;transform:scaleX(0.9794)">Round Time</span>
<span class="t" style="left:1630.70px;top:84.84px;font-size:12px;line-height:16px;transform:scaleX(0.9830)">Short name</span>
<span class="t" style="left:31.30px;top:106.84px;font-size:12px;line-height:16px;transform:scaleX(0.9504)">Category 1</span>
<span class="t" style="left:310.36px;top:106.84px;font-size:12px;line-height:16px;transform:scaleX(0.9697)">0</span>
<span class="t" style="left:323.30px;top:106.84px;font-size:12px;line-height:16px;transform:scaleX(0.9682)">Round Robin (each against each)</span>
<span class="t" style="left:520.10px;top:106.84px;font-size:12px;line-height:16px;transform:scaleX(0.9839)">auto</span>
<span class="t" style="left:580.66px;top:106.84px;font-size:12px;line-height:16px;transform:scaleX(0.9697)">0</span>
<span class="t" style="left:673.10px;top:106.84px;font-size:12px;line-height:16px;transform:scaleX(1.0144)">Participation</span>
<span class="t" style="left:826.52px;top:106.84px;font-size:12px;line-height:16px;transform:scaleX(0.9697)">18</span>
<span class="t" style="left:925.32px;top:106.84px;font-size:12px;line-height:16px;transform:scaleX(0.9697)">99</span>
<span class="t" style="left:1022.10px;top:106.84px;font-size:12px;line-height:16px;transform:scaleX(0.8572)">20.0</span>
<span class="t" style="left:1047.50px;top:106.84px;font-size:12px;line-height:16px;transform:scaleX(0.9342)">RR: 2 third places</span>
<span class="t" style="left:1306.66px;top:106.84px;font-size:12px;line-height:16px;transform:scaleX(0.9697)">0</span>
<span class="t" style="left:1428.66px;top:106.84px;font-size:12px;line-height:16px;transform:scaleX(0.9697)">0</span>
<span class="t" style="left:31.30px;top:124.84px;font-size:12px;line-height:16px;color:#fff;transform:scaleX(0.9606)">Category 2</span>
<span class="t" style="left:310.36px;top:124.84px;font-size:12px;line-height:16px;color:#fff;transform:scaleX(0.9697)">0</span>
<span class="t" style="left:323.30px;top:124.84px;font-size:12px;line-height:16px;color:#fff;transform:scaleX(1.0076)">Elimination (KO-Mode)</span>
<span class="t" style="left:520.10px;top:124.84px;font-size:12px;line-height:16px;color:#fff;transform:scaleX(0.9839)">auto</span>
<span class="t" style="left:580.66px;top:124.84px;font-size:12px;line-height:16px;color:#fff;transform:scaleX(0.9697)">0</span>
<span class="t" style="left:673.10px;top:124.84px;font-size:12px;line-height:16px;color:#fff;transform:scaleX(1.0144)">Participation</span>
<span class="t" style="left:826.52px;top:124.84px;font-size:12px;line-height:16px;color:#fff;transform:scaleX(0.9697)">18</span>
<span class="t" style="left:925.32px;top:124.84px;font-size:12px;line-height:16px;color:#fff;transform:scaleX(0.9697)">99</span>
<span class="t" style="left:1022.10px;top:124.84px;font-size:12px;line-height:16px;color:#fff;transform:scaleX(0.8572)">20.0</span>
<span class="t" style="left:1047.51px;top:124.84px;font-size:12px;line-height:16px;color:#fff;transform:scaleX(0.9697)">-</span>
<span class="t" style="left:1306.66px;top:124.84px;font-size:12px;line-height:16px;color:#fff;transform:scaleX(0.9697)">0</span>
<span class="t" style="left:1428.66px;top:124.84px;font-size:12px;line-height:16px;color:#fff;transform:scaleX(0.9697)">0</span>
<span class="t" style="left:31.30px;top:142.84px;font-size:12px;line-height:16px;transform:scaleX(0.9810)">Category 3 - female</span>
<span class="t" style="left:213.71px;top:142.84px;font-size:12px;line-height:16px;transform:scaleX(0.9697)">f</span>
<span class="t" style="left:310.36px;top:142.84px;font-size:12px;line-height:16px;transform:scaleX(0.9697)">0</span>
<span class="t" style="left:323.30px;top:142.84px;font-size:12px;line-height:16px;transform:scaleX(0.9942)">Point table</span>
<span class="t" style="left:520.10px;top:142.84px;font-size:12px;line-height:16px;transform:scaleX(0.9839)">auto</span>
<span class="t" style="left:580.66px;top:142.84px;font-size:12px;line-height:16px;transform:scaleX(0.9697)">0</span>
<span class="t" style="left:673.10px;top:142.84px;font-size:12px;line-height:16px;transform:scaleX(1.0144)">Participation</span>
<span class="t" style="left:826.52px;top:142.84px;font-size:12px;line-height:16px;transform:scaleX(0.9697)">18</span>
<span class="t" style="left:925.32px;top:142.84px;font-size:12px;line-height:16px;transform:scaleX(0.9697)">99</span>
<span class="t" style="left:1022.10px;top:142.84px;font-size:12px;line-height:16px;transform:scaleX(0.8572)">20.0</span>
<span class="t" style="left:1047.50px;top:142.84px;font-size:12px;line-height:16px;transform:scaleX(0.9317)">Points: WUSHU TRAD. TAOLU</span>
<span class="t" style="left:1306.66px;top:142.84px;font-size:12px;line-height:16px;transform:scaleX(0.9697)">0</span>
<span class="t" style="left:1428.66px;top:142.84px;font-size:12px;line-height:16px;transform:scaleX(0.9697)">0</span>
<span class="t" style="left:31.30px;top:160.84px;font-size:12px;line-height:16px;transform:scaleX(0.9791)">Category 4 - male</span>
<span class="t" style="left:214.50px;top:160.84px;font-size:12px;line-height:16px;transform:scaleX(0.9697)">m</span>
<span class="t" style="left:310.36px;top:160.84px;font-size:12px;line-height:16px;transform:scaleX(0.9697)">0</span>
<span class="t" style="left:323.30px;top:160.84px;font-size:12px;line-height:16px;transform:scaleX(0.9942)">Point table</span>
<span class="t" style="left:520.10px;top:160.84px;font-size:12px;line-height:16px;transform:scaleX(0.9839)">auto</span>
<span class="t" style="left:580.66px;top:160.84px;font-size:12px;line-height:16px;transform:scaleX(0.9697)">0</span>
<span class="t" style="left:673.10px;top:160.84px;font-size:12px;line-height:16px;transform:scaleX(1.0144)">Participation</span>
<span class="t" style="left:826.52px;top:160.84px;font-size:12px;line-height:16px;transform:scaleX(0.9697)">18</span>
<span class="t" style="left:925.32px;top:160.84px;font-size:12px;line-height:16px;transform:scaleX(0.9697)">99</span>
<span class="t" style="left:1022.10px;top:160.84px;font-size:12px;line-height:16px;transform:scaleX(0.8572)">20.0</span>
<span class="t" style="left:1047.50px;top:160.84px;font-size:12px;line-height:16px;transform:scaleX(0.9317)">Points: WUSHU TRAD. TAOLU</span>
<span class="t" style="left:1306.66px;top:160.84px;font-size:12px;line-height:16px;transform:scaleX(0.9697)">0</span>
<span class="t" style="left:1428.66px;top:160.84px;font-size:12px;line-height:16px;transform:scaleX(0.9697)">0</span>
<span class="t" style="left:31.30px;top:178.84px;font-size:12px;line-height:16px;transform:scaleX(0.9606)">Category 5</span>
<span class="t" style="left:214.50px;top:178.84px;font-size:12px;line-height:16px;transform:scaleX(0.9697)">m</span>
<span class="t" style="left:310.36px;top:178.84px;font-size:12px;line-height:16px;transform:scaleX(0.9697)">0</span>
<span class="t" style="left:323.30px;top:178.84px;font-size:12px;line-height:16px;transform:scaleX(1.0076)">Elimination (KO-Mode)</span>
<span class="t" style="left:520.10px;top:178.84px;font-size:12px;line-height:16px;transform:scaleX(0.9839)">auto</span>
<span class="t" style="left:580.66px;top:178.84px;font-size:12px;line-height:16px;transform:scaleX(0.9697)">0</span>
<span class="t" style="left:673.10px;top:178.84px;font-size:12px;line-height:16px;transform:scaleX(1.0144)">Participation</span>
<span class="t" style="left:826.52px;top:178.84px;font-size:12px;line-height:16px;transform:scaleX(0.9697)">16</span>
<span class="t" style="left:925.32px;top:178.84px;font-size:12px;line-height:16px;transform:scaleX(0.9697)">99</span>
<span class="t" style="left:1022.10px;top:178.84px;font-size:12px;line-height:16px;transform:scaleX(0.8572)">20.0</span>
<span class="t" style="left:1047.51px;top:178.84px;font-size:12px;line-height:16px;transform:scaleX(0.9697)">-</span>
<span class="t" style="left:1306.66px;top:178.84px;font-size:12px;line-height:16px;transform:scaleX(0.9697)">0</span>
<span class="t" style="left:1428.66px;top:178.84px;font-size:12px;line-height:16px;transform:scaleX(0.9697)">0</span>
<span class="t" style="left:31.30px;top:196.84px;font-size:12px;line-height:16px;transform:scaleX(0.9795)">Team Category</span>
<span class="t" style="left:158.71px;top:196.84px;font-size:12px;line-height:16px;transform:scaleX(0.9697)">t</span>
<span class="t" style="left:310.36px;top:196.84px;font-size:12px;line-height:16px;transform:scaleX(0.9697)">0</span>
<span class="t" style="left:323.30px;top:196.84px;font-size:12px;line-height:16px;transform:scaleX(1.0076)">Elimination (KO-Mode)</span>
<span class="t" style="left:520.10px;top:196.84px;font-size:12px;line-height:16px;transform:scaleX(0.9839)">auto</span>
<span class="t" style="left:580.66px;top:196.84px;font-size:12px;line-height:16px;transform:scaleX(0.9697)">0</span>
<span class="t" style="left:673.10px;top:196.84px;font-size:12px;line-height:16px;transform:scaleX(1.0144)">Participation</span>
<span class="t" style="left:826.52px;top:196.84px;font-size:12px;line-height:16px;transform:scaleX(0.9697)">18</span>
<span class="t" style="left:925.32px;top:196.84px;font-size:12px;line-height:16px;transform:scaleX(0.9697)">99</span>
<span class="t" style="left:1022.10px;top:196.84px;font-size:12px;line-height:16px;transform:scaleX(0.8572)">30.0</span>
<span class="t" style="left:1047.51px;top:196.84px;font-size:12px;line-height:16px;transform:scaleX(0.9697)">-</span>
<span class="t" style="left:1306.66px;top:196.84px;font-size:12px;line-height:16px;transform:scaleX(0.9697)">0</span>
<span class="t" style="left:1428.66px;top:196.84px;font-size:12px;line-height:16px;transform:scaleX(0.9697)">0</span>
<span class="t" style="left:1535.10px;top:106.64px;font-size:12px;line-height:16px;transform:scaleX(0.8825)">3:00</span>
<span class="t" style="left:52.20px;top:1154.84px;font-size:12px;line-height:16px;transform:scaleX(0.9896)">Competitor Categories</span>
<span class="t" style="left:206.30px;top:1154.84px;font-size:12px;line-height:16px;transform:scaleX(0.9475)">Officials Categories, Coach, Referee, Press</span>
<span class="t" style="left:459.70px;top:1154.84px;font-size:12px;line-height:16px;transform:scaleX(1.0036)">Welcome</span>
<span class="t" style="left:4.80px;top:1181.74px;font-size:10px;line-height:14px;font-weight:bold;transform:scaleX(1.0486)">2023-11-13 14:20:39:829 </span>
<span class="t" style="left:128.50px;top:1181.74px;font-size:10px;line-height:14px;font-weight:bold;transform:scaleX(0.9498)">[INFO] </span>
<span class="t" style="left:161.00px;top:1181.74px;font-size:10px;line-height:14px;font-weight:bold;transform:scaleX(1.0364)">Messages </span>
<span class="t" style="left:214.80px;top:1181.74px;font-size:10px;line-height:14px;font-weight:bold;transform:scaleX(0.9691)">found </span>
<span class="t" style="left:244.89px;top:1181.74px;font-size:10px;line-height:14px;font-weight:bold;transform:scaleX(1.0027)">0</span>
<div class="a" id="redbox"></div>
</body>
</html>
